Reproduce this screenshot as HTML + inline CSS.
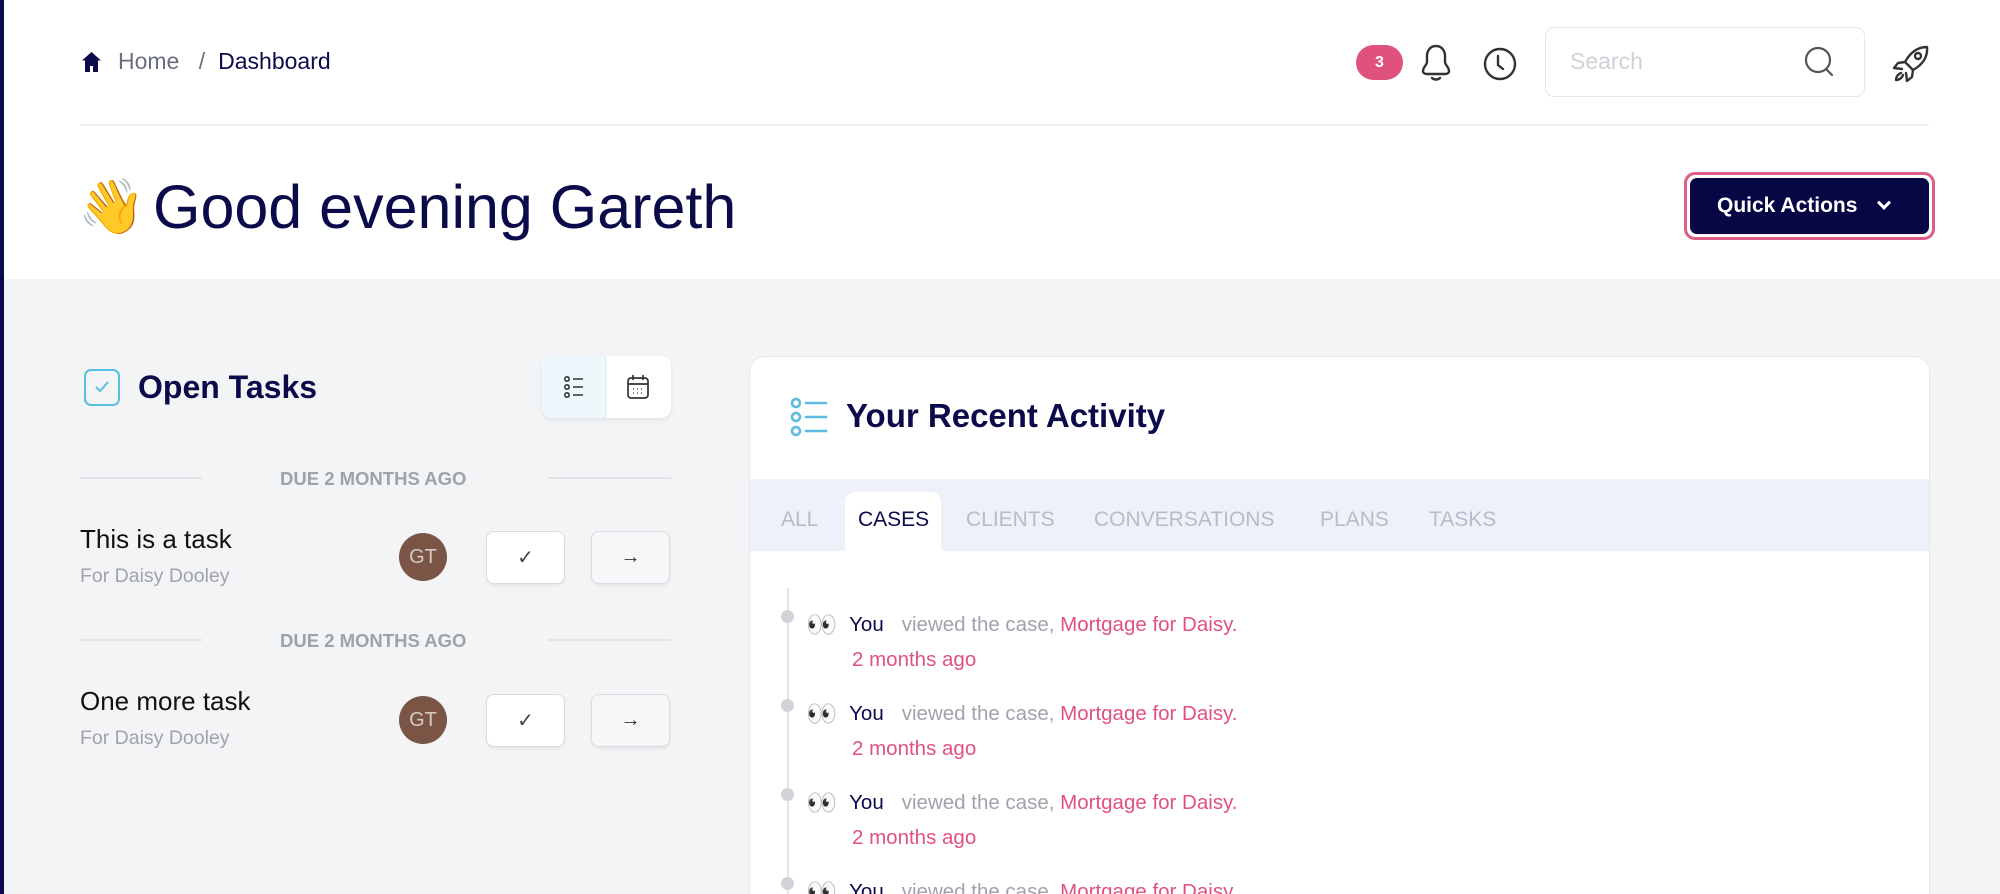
<!DOCTYPE html>
<html><head><meta charset="utf-8"><style>
*{margin:0;padding:0;box-sizing:border-box}
html{width:2000px;height:894px;overflow:hidden}
body{width:2000px;height:894px;overflow:hidden;background:#f3f4f6;font-family:"Liberation Sans",sans-serif;position:relative;color:#0b0a4a}
.a{position:absolute}
.top{left:0;top:0;width:2000px;height:279px;background:#fff}
.lb{left:0;top:0;width:4px;height:894px;background:#0b0a4a}
.t{white-space:nowrap}
.btn{background:#fff;border:1px solid #d9dbe0;border-radius:8px;box-shadow:0 2px 3px rgba(0,0,0,.06)}
.tab{top:508px;font-size:21px;color:#b8bbca;white-space:nowrap}
.dot{width:13px;height:13px;border-radius:50%;background:#d1d3d8;left:781px}
.row{left:806px;font-size:20.5px;white-space:nowrap}
.row .e{font-size:25px;vertical-align:-2px}
.row .y{color:#0b0a4a;margin:0 18px 0 12px}
.row .g{color:#a0a3ad}
.row .p{color:#e0527e}
.tm{left:852px;font-size:20.5px;color:#e0527e}
</style></head><body>
<div class="a top"></div>
<div class="a lb"></div>
<svg class="a" style="left:81px;top:51px" width="21" height="22" viewBox="0 0 21 22"><path d="M10.5 1L1 9.5h3V21h5v-6h3v6h5V9.5h3z" fill="#0b0a4a"/></svg>
<div class="a t" style="left:118px;top:48px;font-size:23px;color:#6b6e80">Home <span style="margin:0 13px">/</span><span style="color:#0b0a4a">Dashboard</span></div>
<div class="a" style="left:80px;top:124px;width:1849px;height:2px;background:#f1f2f4"></div>
<div class="a" style="left:1356px;top:45px;width:47px;height:35px;border-radius:18px;background:#e0527e;color:#fff;font-weight:bold;font-size:16px;text-align:center;line-height:35px">3</div>
<svg class="a" style="left:1418px;top:42px" width="36" height="42" viewBox="0 0 36 42" fill="none" stroke="#333" stroke-width="2.4" stroke-linecap="round"><path d="M18 4c-6 0-9 5-9 10v6c0 3-4 5-4 9 0 2 2 3 4 3h18c2 0 4-1 4-3 0-4-4-6-4-9v-6c0-5-3-10-9-10z"/><path d="M14 36c2 2 6 2 8 0"/></svg>
<svg class="a" style="left:1482px;top:46px" width="36" height="36" viewBox="0 0 36 36" fill="none" stroke="#333" stroke-width="2.4" stroke-linecap="round"><circle cx="18" cy="18" r="15"/><path d="M16 10v9l5 4"/></svg>
<div class="a" style="left:1545px;top:27px;width:320px;height:70px;border:1.5px solid #e5e7eb;border-radius:9px;background:#fff"></div>
<div class="a t" style="left:1570px;top:48px;font-size:23px;color:#d0d2d8">Search</div>
<svg class="a" style="left:1803px;top:45px" width="32" height="34" viewBox="0 0 32 34" fill="none" stroke="#555" stroke-width="2.2" stroke-linecap="round"><circle cx="15" cy="15" r="12"/><path d="M24 25l5 5"/></svg>
<svg class="a" style="left:1891px;top:44px" width="40" height="40" viewBox="0 0 40 40" fill="none" stroke="#333" stroke-width="2.4" stroke-linejoin="round" stroke-linecap="round"><path d="M36 3c-10 0-17 6-22 15l8 8c9-5 15-12 14-23z"/><circle cx="27" cy="12" r="3"/><path d="M14 18l-7 1-4 5 8 1M22 26l-1 7-5 4-1-8M10 29c-3 1-5 4-5 7 3 0 6-2 7-5"/></svg>
<div class="a t" style="left:78px;top:176px;font-size:54px">👋</div>
<div class="a t" style="left:153px;top:172px;font-size:61px;color:#0b0a4a">Good evening Gareth</div>
<div class="a" style="left:1684px;top:172px;width:251px;height:68px;border:3px solid #dc5e86;border-radius:11px;padding:3px"><div style="width:100%;height:100%;background:#070746;border-radius:7px;color:#fff;font-weight:bold;font-size:21px;line-height:56px;padding-left:27px">Quick Actions<span style="display:inline-block;margin-left:22px;width:10px;height:10px;border-right:3px solid #fff;border-bottom:3px solid #fff;transform:rotate(45deg) translate(-3px,-3px)"></span></div></div>
<div class="a" style="left:84px;top:369px;width:36px;height:37px;border:2.5px solid #5bbde0;border-radius:7px"></div>
<svg class="a" style="left:92px;top:378px" width="20" height="18" viewBox="0 0 20 18" fill="none" stroke="#5bbde0" stroke-width="2"><path d="M4 9l4 4 8-9"/></svg>
<div class="a t" style="left:138px;top:369px;font-size:32px;font-weight:bold">Open Tasks</div>
<div class="a" style="left:542px;top:356px;width:129px;height:62px;background:#fff;border-radius:10px;box-shadow:0 2px 5px rgba(0,0,0,.08);overflow:hidden"><div style="width:64px;height:100%;background:#eef8fc;border-right:1px solid #e3e6ea"></div></div>
<svg class="a" style="left:562px;top:375px" width="24" height="24" viewBox="0 0 24 24" fill="none" stroke="#333" stroke-width="1.6"><circle cx="5" cy="4" r="2.2"/><circle cx="5" cy="12" r="2.2"/><circle cx="5" cy="20" r="2.2"/><path d="M11 4h10M11 12h10M11 20h10"/></svg>
<svg class="a" style="left:626px;top:374px" width="24" height="26" viewBox="0 0 24 26" fill="none" stroke="#333" stroke-width="1.7"><rect x="2" y="4" width="20" height="20" rx="3"/><path d="M2 10h20M7 1v5M17 1v5"/><path d="M7 15h1M11 15h1M15 15h1M7 19h1M11 19h1M15 19h1" stroke-width="1.2"/></svg>
<div class="a" style="left:80px;top:477px;width:122px;height:1.5px;background:#e2e4e8"></div>
<div class="a" style="left:548px;top:477px;width:123px;height:1.5px;background:#e2e4e8"></div>
<div class="a t" style="left:280px;top:468px;font-size:18.5px;font-weight:bold;color:#9ea2ad">DUE 2 MONTHS AGO</div>
<div class="a t" style="left:80px;top:524px;font-size:26px;color:#111">This is a task</div>
<div class="a t" style="left:80px;top:565px;font-size:19.5px;color:#a0a3ad">For Daisy Dooley</div>
<div class="a" style="left:399px;top:533px;width:48px;height:48px;border-radius:50%;background:#7a5546;color:#d8c8c2;font-size:20px;text-align:center;line-height:48px">GT</div>
<div class="a btn" style="left:486px;top:531px;width:79px;height:53px;text-align:center;line-height:53px;font-size:20px;color:#444">✓</div>
<div class="a btn" style="left:591px;top:531px;width:79px;height:53px;text-align:center;line-height:51px;font-size:20px;color:#333;background:#f6f7f9">→</div>
<div class="a" style="left:80px;top:639px;width:122px;height:1.5px;background:#e2e4e8"></div>
<div class="a" style="left:548px;top:639px;width:123px;height:1.5px;background:#e2e4e8"></div>
<div class="a t" style="left:280px;top:630px;font-size:18.5px;font-weight:bold;color:#9ea2ad">DUE 2 MONTHS AGO</div>
<div class="a t" style="left:80px;top:686px;font-size:26px;color:#111">One more task</div>
<div class="a t" style="left:80px;top:727px;font-size:19.5px;color:#a0a3ad">For Daisy Dooley</div>
<div class="a" style="left:399px;top:696px;width:48px;height:48px;border-radius:50%;background:#7a5546;color:#d8c8c2;font-size:20px;text-align:center;line-height:48px">GT</div>
<div class="a btn" style="left:486px;top:694px;width:79px;height:53px;text-align:center;line-height:53px;font-size:20px;color:#444">✓</div>
<div class="a btn" style="left:591px;top:694px;width:79px;height:53px;text-align:center;line-height:51px;font-size:20px;color:#333;background:#f6f7f9">→</div>
<div class="a" style="left:749px;top:356px;width:1181px;height:538px;background:#fff;border:1.5px solid #e5e7eb;border-bottom:none;border-radius:16px 16px 0 0;overflow:hidden">
<div style="position:absolute;left:0;top:122px;width:100%;height:72px;background:#eef0fa"></div>
<div style="position:absolute;left:95px;top:135px;width:96px;height:60px;background:#fff;border-radius:10px 10px 0 0"></div>
</div>
<svg class="a" style="left:790px;top:397px" width="38" height="40" viewBox="0 0 38 40" fill="none" stroke="#5bbde0" stroke-width="2.6" stroke-linecap="round"><circle cx="6" cy="6" r="4"/><circle cx="6" cy="20" r="4"/><circle cx="6" cy="34" r="4"/><path d="M16 6h20M16 20h20M16 34h20"/></svg>
<div class="a t" style="left:846px;top:397px;font-size:33px;font-weight:bold">Your Recent Activity</div>
<div class="a tab" style="left:781px">ALL</div>
<div class="a tab" style="left:858px;color:#0b0a4a">CASES</div>
<div class="a tab" style="left:966px">CLIENTS</div>
<div class="a tab" style="left:1094px">CONVERSATIONS</div>
<div class="a tab" style="left:1320px">PLANS</div>
<div class="a tab" style="left:1429px">TASKS</div>
<div class="a" style="left:787px;top:588px;width:2px;height:306px;background:#e2e4e8"></div>
<div class="a dot" style="top:610px"></div>
<div class="a row" style="top:611px"><span class="e">👀</span><span class="y">You</span><span class="g">viewed the case, </span><span class="p">Mortgage for Daisy.</span></div>
<div class="a tm" style="top:648px">2 months ago</div>
<div class="a dot" style="top:699px"></div>
<div class="a row" style="top:700px"><span class="e">👀</span><span class="y">You</span><span class="g">viewed the case, </span><span class="p">Mortgage for Daisy.</span></div>
<div class="a tm" style="top:737px">2 months ago</div>
<div class="a dot" style="top:788px"></div>
<div class="a row" style="top:789px"><span class="e">👀</span><span class="y">You</span><span class="g">viewed the case, </span><span class="p">Mortgage for Daisy.</span></div>
<div class="a tm" style="top:826px">2 months ago</div>
<div class="a dot" style="top:877px"></div>
<div class="a row" style="top:878px"><span class="e">👀</span><span class="y">You</span><span class="g">viewed the case, </span><span class="p">Mortgage for Daisy.</span></div>
</body></html>
